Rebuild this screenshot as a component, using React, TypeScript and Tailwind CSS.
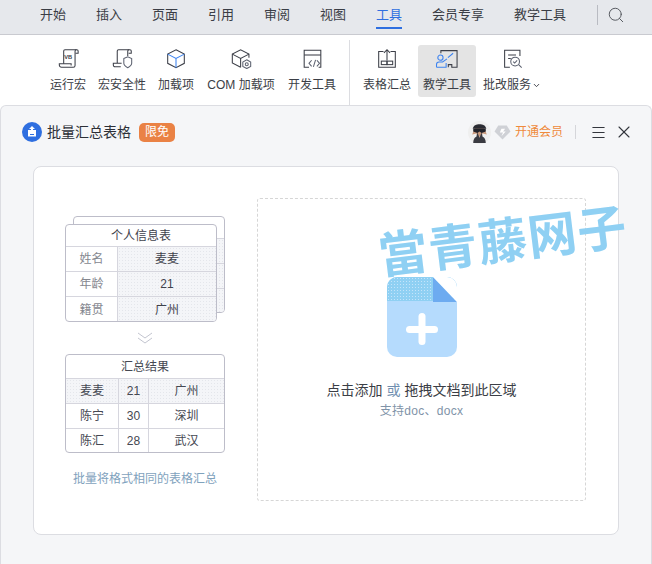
import { ChevronDown, Menu, Search, X } from 'lucide-react';

const tabs = [
  { label: '开始', width: 'w-14' },
  { label: '插入', width: 'w-14' },
  { label: '页面', width: 'w-14' },
  { label: '引用', width: 'w-14' },
  { label: '审阅', width: 'w-14' },
  { label: '视图', width: 'w-14' },
  { label: '工具', width: 'w-14', active: true },
  { label: '会员专享', width: 'w-[82px]' },
  { label: '教学工具', width: 'w-[82px]' },
];

const dots =
  'bg-[#f4f5f8] bg-[radial-gradient(#e4e6eb_0.6px,transparent_0.7px)] bg-[length:3px_3px]';

function VbIcon() {
  return (
    <svg width="21" height="21" viewBox="0 0 24 24" fill="none" stroke="#3c3f48" strokeWidth="1.2">
      <path d="M6.500 18V3.500A1.500 1.500 0 0 1 8 2h13.500A1.500 1.500 0 0 1 23 3.500V6h-3" />
      <path d="M21 2a1.500 1.500 0 0 0-1.500 1.500V20a2 2 0 0 1-2 2H4a2.500 2.500 0 0 1-2.500-2.500V18H15v2" />
      <text x="7" y="12.500" fontSize="6.500" fontWeight="700" fill="#3c3f48" stroke="none" fontFamily="Liberation Sans">
        VB
      </text>
    </svg>
  );
}

function ShieldScrollIcon() {
  return (
    <svg width="21" height="21" viewBox="0 0 24 24" fill="none" stroke="#3c3f48" strokeWidth="1.2">
      <path d="M6 17V3.500A1.500 1.500 0 0 1 7.500 2h13A1.500 1.500 0 0 1 22 3.500V6h-3" />
      <path d="M19.500 2A1.500 1.500 0 0 0 18 3.500V9" />
      <path d="M10 21.500H3.500a2 2 0 0 1-2-2v-2H11" />
      <path d="M13.500 12l4.500-2 4.500 2v5.500c0 2.500-2.500 4-4.500 5-2-1-4.500-2.500-4.500-5z" stroke="#5d6270" />
    </svg>
  );
}

function CubeIcon() {
  return (
    <svg width="20" height="21" viewBox="0 0 22 24" fill="none" strokeWidth="1.2">
      <path d="M11 2l9.500 5v10.500L11 22.500 1.500 17.500V7z" stroke="#3c3f48" />
      <path d="M1.500 7L11 12l9.500-5M11 12v10.500" stroke="#3b82f0" />
    </svg>
  );
}

function CubeGearIcon() {
  return (
    <svg width="21" height="21" viewBox="0 0 24 24" fill="none" strokeWidth="1.2" stroke="#3c3f48">
      <path d="M11 22L1.500 17V7L11 2l9.500 5v4" />
      <path d="M1.500 7L11 12l9.500-5M11 12v10" />
      <path d="M18 13.500l4.500 2.500v5L18 23.500 13.500 21v-5z" stroke="#5d6270" fill="#fff" />
      <circle cx="18" cy="18.500" r="1.700" stroke="#5d6270" />
    </svg>
  );
}

function DevIcon() {
  return (
    <svg width="21" height="21" viewBox="0 0 24 24" fill="none" strokeWidth="1.200" stroke="#3c3f48">
      <path d="M8 22H2.500V2.500h19V22H19" />
      <path d="M2.500 8h19" />
      <path d="M11 14l-3 3.500 3 3.500M17 14l3 3.500-3 3.500" stroke="#5d6270" />
      <path d="M15.500 13.500l-2.500 8" stroke="#5d6270" />
    </svg>
  );
}

function SummaryIcon() {
  return (
    <svg width="20" height="21" viewBox="0 0 22 24" fill="none" strokeWidth="1.200" stroke="#3c3f48">
      <path d="M7 4H1.500v18h19V4H15" />
      <path d="M11 14V2M7.500 5.500L11 2l3.500 3.500" />
      <rect x="4.500" y="15" width="6.500" height="4" />
      <rect x="11" y="15" width="6.500" height="4" />
    </svg>
  );
}

function TeachIcon() {
  return (
    <svg width="24" height="21" viewBox="0 0 26 24" fill="none" strokeWidth="1.200">
      <path d="M6 6V3h18.500v19H18" stroke="#3c3f48" />
      <path d="M14 11l6-5" stroke="#3b82f0" />
      <circle cx="5.500" cy="11" r="3" stroke="#3b82f0" />
      <path d="M1 22v-3c0-2 1.500-3 3-3h4l5-3.500M1 22h11v-5" stroke="#3b82f0" />
      <path d="M14.500 22v-3h4v3" stroke="#3c3f48" />
    </svg>
  );
}

function ReviewIcon() {
  return (
    <svg width="21" height="21" viewBox="0 0 24 24" fill="none" strokeWidth="1.200" stroke="#3c3f48">
      <path d="M9 22H3V2.500h17.500V9" />
      <path d="M7 8h9M7 12h3" />
      <circle cx="15" cy="15.500" r="5" stroke="#5d6270" />
      <path d="M12.800 15.500l1.700 1.700 2.800-3M19 19l3.500 3.500" stroke="#5d6270" />
    </svg>
  );
}

function RibbonItem({
  label,
  icon,
  width,
  active,
  caret,
}: {
  label: string;
  icon: React.ReactNode;
  width: string;
  active?: boolean;
  caret?: boolean;
}) {
  return (
    <div
      className={`${width} h-[52px] flex flex-col items-center rounded-[3px] pt-px ${active ? 'bg-[#e4e4e4]' : ''}`}
    >
      <div className="h-6 flex items-center justify-center">{icon}</div>
      <div className="mt-[6px] flex items-center text-xs leading-[18px] text-[#3b3e46] whitespace-nowrap">
        {label}
        {caret && <ChevronDown size={9} strokeWidth={2.5} className="ml-[1px]" />}
      </div>
    </div>
  );
}

function Avatar() {
  return (
    <svg width="23" height="23" viewBox="0 0 22 22">
      <circle cx="11" cy="11" r="11" fill="#efefef" />
      <path d="M6 8c1-3 9-3 10 0l2 5-4-1-1 3H9l-1-3-4 1z" fill="#c99a7e" />
      <path d="M5 7.500h12v2.500l-4 1.500L11 10l-2 1.500L5 10z" fill="#22232a" />
      <path d="M11 3c-3 0-6 1-6.500 4.500h13C17 4 14 3 11 3z" fill="#2b2c33" />
      <path d="M9 11l2 5 2-5 1 4c2 .5 3 3 3 6H5c0-3 1-5.500 3-6z" fill="#3a3b42" />
    </svg>
  );
}

function VipIcon() {
  return (
    <svg width="17" height="15" viewBox="0 0 16 14">
      <path d="M4 .5h8l3.500 5.500L8 13.500.5 6z" fill="#cfd1d6" />
      <path d="M10.500 3.500H7L5.500 7h3L7 10.500 11 6H8.500z" fill="#fff" />
    </svg>
  );
}

function Cell({ children, className = '' }: { children: React.ReactNode; className?: string }) {
  return <div className={`flex items-center justify-center ${className}`}>{children}</div>;
}

function SourceTable() {
  const rows = [
    ['姓名', '麦麦'],
    ['年龄', '21'],
    ['籍贯', '广州'],
  ];
  return (
    <div className="relative w-[160px] h-[106px]">
      <div className="absolute left-2 top-0 w-[152px] h-[97px] rounded border border-[#bdbdc9] bg-white overflow-hidden">
        <div className="h-[22px] border-b border-[#d6d6de]" />
        <div className={`h-[25px] border-b border-[#d6d6de] ${dots}`} />
        <div className={`h-[25px] border-b border-[#d6d6de] ${dots}`} />
        <div className={`h-[25px] ${dots}`} />
      </div>
      <div className="absolute left-0 top-2 w-[152px] h-[98px] rounded border border-[#bdbdc9] bg-white overflow-hidden text-xs">
        <Cell className="h-[22px] border-b border-[#d6d6de] text-[#3f424c]">个人信息表</Cell>
        {rows.map((row, i) => (
          <div key={row[0]} className={`flex h-[25px] ${i < 2 ? 'border-b border-[#d6d6de]' : ''}`}>
            <Cell className="w-[52px] border-r border-[#d6d6de] text-[#85878f]">{row[0]}</Cell>
            <Cell className={`flex-1 text-[#3f424c] ${dots}`}>{row[1]}</Cell>
          </div>
        ))}
      </div>
    </div>
  );
}

function ResultTable() {
  const rows = [
    ['麦麦', '21', '广州'],
    ['陈宁', '30', '深圳'],
    ['陈汇', '28', '武汉'],
  ];
  return (
    <div className="w-[160px] h-[99px] rounded border border-[#bdbdc9] bg-white overflow-hidden text-xs text-[#454852]">
      <Cell className="h-[24px] border-b border-[#d6d6de]">汇总结果</Cell>
      {rows.map((row, i) => (
        <div
          key={row[0]}
          className={`flex ${i === 2 ? 'h-[23px]' : 'h-[25px] border-b border-[#d6d6de]'} ${i === 0 ? dots : ''}`}
        >
          <Cell className="w-[53px] border-r border-[#d6d6de]">{row[0]}</Cell>
          <Cell className="w-[30px] border-r border-[#d6d6de]">{row[1]}</Cell>
          <Cell className="flex-1">{row[2]}</Cell>
        </div>
      ))}
    </div>
  );
}

function AddFileIcon() {
  return (
    <div className="relative z-10 w-[70px] h-[80px] rounded-[10px] overflow-hidden bg-[#b5dbfd]">
      {/* top of the sheet, dithered where the watermark crosses it */}
      <div className="absolute left-0 top-0 w-[70px] h-6 bg-[#8fd0f3] bg-[radial-gradient(#c4e4fa_0.6px,transparent_0.7px)] bg-[length:3px_3px]" />
      <svg className="absolute left-0 top-0" width="70" height="80" viewBox="0 0 70 80">
        <path d="M46 0L70 25H46z" fill="#6dabf0" />
        <path d="M46 0h24v25z" fill="#fff" />
        <rect x="19" y="49" width="32" height="7" rx="3.500" fill="#fff" />
        <rect x="31.500" y="36" width="7" height="32" rx="3.500" fill="#fff" />
      </svg>
    </div>
  );
}

export default function App() {
  return (
    <div className="relative w-[652px] h-[564px] overflow-hidden bg-white font-['Liberation_Sans','Noto_Sans_CJK_SC',sans-serif]">
      {/* Tabs */}
      <div className="h-[35px] flex items-center pl-[25px] bg-[#e6e8ec] border-b border-[#c9cad0] text-[13px] text-[#3a3d45]">
        {tabs.map((tab) => (
          <div key={tab.label} className={`${tab.width} h-full flex justify-center`}>
            <span
              className={`h-[29px] leading-[30px] whitespace-nowrap ${tab.active ? 'text-[#2f6fe0] border-b-[2px] border-[#2f6fe0]' : ''}`}
            >
              {tab.label}
            </span>
          </div>
        ))}
        <div className="ml-4 -mt-1 h-5 w-px bg-[#b9bbc2]" />
        <Search size={18} strokeWidth={1.3} className="ml-[9px] -mt-1 text-[#55585f]" />
      </div>

      {/* Ribbon */}
      <div className="h-[70px] flex items-start pl-[44px] pt-[10px]">
        <RibbonItem label="运行宏" icon={<VbIcon />} width="w-12" />
        <RibbonItem label="宏安全性" icon={<ShieldScrollIcon />} width="w-[60px]" />
        <RibbonItem label="加载项" icon={<CubeIcon />} width="w-12" />
        <RibbonItem label="COM 加载项" icon={<CubeGearIcon />} width="w-[82px]" />
        <RibbonItem label="开发工具" icon={<DevIcon />} width="w-[60px]" />
        <div className="ml-[7px] mr-[7px] -mt-[5px] h-[65px] w-px bg-[#dcdde1]" />
        <RibbonItem label="表格汇总" icon={<SummaryIcon />} width="w-[60px]" />
        <div className="ml-px">
          <RibbonItem label="教学工具" icon={<TeachIcon />} width="w-[58px]" active />
        </div>
        <RibbonItem label="批改服务" icon={<ReviewIcon />} width="w-[72px]" caret />
      </div>

      {/* Dialog */}
      <div className="h-[459px] rounded-t-md border-t border-x border-[#dcdde2] bg-[#f5f6f8] px-[32px]">
        <div className="-mx-[11px] h-[60px] pb-2 flex items-center">
          <svg width="20" height="20" viewBox="0 0 20 20">
            <circle cx="10" cy="10" r="10" fill="#2f6fe0" />
            <path d="M6 8v6.500h8V8" fill="#fff" />
            <path d="M10 4l3 3h-2v4H9V7H7z" fill="#fff" />
            <path d="M8 12.500h4" stroke="#2f6fe0" />
          </svg>
          <span className="ml-[5px] text-sm text-[#2c2f37]">批量汇总表格</span>
          <span className="ml-2 w-9 h-[19px] rounded-[5px] bg-[#ea8245] text-white text-xs leading-[19px] text-center">
            限免
          </span>
          <div className="ml-auto -mr-[4px] flex items-center">
            <Avatar />
            <div className="ml-[3px]">
              <VipIcon />
            </div>
            <span className="ml-[4px] text-xs text-[#ef8a3c]">开通会员</span>
            <div className="ml-3 h-[14px] w-px bg-[#d5d6da]" />
            <Menu size={17} strokeWidth={1.5} className="ml-[14px] text-[#33363d]" />
            <X size={20} strokeWidth={1.3} className="ml-[7px] text-[#33363d]" />
          </div>
        </div>

        <div className="h-[369px] rounded-lg border border-[#dcdde2] bg-white flex pl-[31px] pt-[31px]">
          <div className="w-[160px] pt-[18px] flex flex-col">
            <SourceTable />
            <div className="h-[32px] flex items-center justify-center">
              <svg width="16" height="12" viewBox="0 0 16 12" fill="none" stroke="#c3c5d0" strokeWidth="1">
                <path d="M1 1l7 5 7-5M1 6l7 5 7-5" />
              </svg>
            </div>
            <ResultTable />
            <p className="mt-[17px] text-xs leading-[18px] text-center text-[#7fa2bd]">批量将格式相同的表格汇总</p>
          </div>

          <div className="ml-[32px] w-[329px] h-[303px] border border-dashed border-[#d6d6d6] rounded-[3px] flex flex-col items-center pt-[78px]">
            <AddFileIcon />
            <p className="mt-[24px] text-sm leading-[18px] text-[#3b3e46]">
              点击添加 <span className="text-[#6f8fb0]">或</span> 拖拽文档到此区域
            </p>
            <p className="mt-[3px] text-xs leading-[18px] tracking-[0.3px] text-[#7f93a8]">支持doc、docx</p>
          </div>
        </div>
      </div>

      {/* Watermark */}
      <div className="absolute left-[379px] top-[227px] -rotate-[7deg] origin-left text-[49px] leading-[60px] font-bold tracking-[1px] text-[#8fd0f3] whitespace-nowrap pointer-events-none">
        當青藤网子
      </div>
    </div>
  );
}
